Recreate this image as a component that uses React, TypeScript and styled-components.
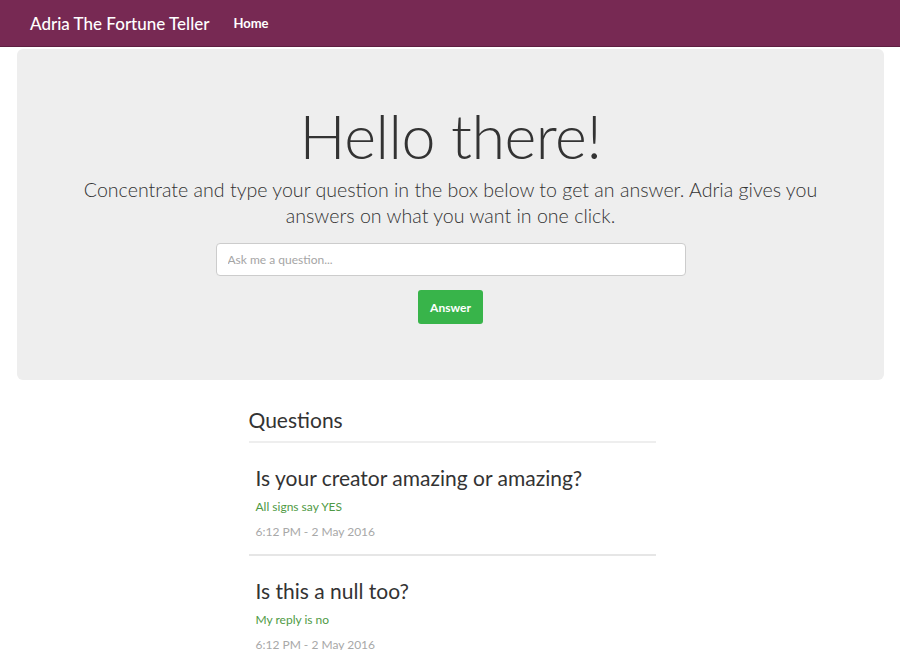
import React from 'react';
import styled, { createGlobalStyle } from 'styled-components';

const GlobalStyle = createGlobalStyle`
	body {
		margin: 0;
		background: #ffffff;
		font-family: Lato, 'Open Sans', sans-serif;
		color: #333333;
	}
`;

const Navbar = styled.nav`
	height: 46px;
	background: #772953;
	border-bottom: 1px solid #5e1f41;
	display: flex;
	align-items: center;
	padding-left: 30px;
	gap: 24px;
`;

const Brand = styled.a`
	color: #ffffff;
	font-size: 17px;
	font-weight: 500;
	text-decoration: none;
`;

const NavItem = styled.a`
	color: #ffffff;
	font-size: 13px;
	font-weight: 700;
	text-decoration: none;
`;

const Page = styled.div`
	padding: 2px 16px 0 17px;
`;

const Jumbotron = styled.section`
	background: #eeeeee;
	border-radius: 6px;
	height: 331px;
	display: flex;
	flex-direction: column;
	align-items: center;
	box-sizing: border-box;
	padding-top: 56px;
`;

const Title = styled.h1`
	margin: 0;
	font-size: 61px;
	font-weight: 300;
	line-height: 1;
	color: #333333;
	letter-spacing: -0.5px;
`;

const Lead = styled.p`
	margin: 11px 0 0;
	width: 780px;
	text-align: center;
	font-size: 19.6px;
	font-weight: 300;
	line-height: 26px;
	color: #333333;
`;

const AskForm = styled.form`
	display: flex;
	flex-direction: column;
	align-items: center;
	margin-top: 14px;
	gap: 14px;
`;

const QuestionInput = styled.input`
	width: 470px;
	height: 33px;
	box-sizing: border-box;
	border: 1px solid #cccccc;
	border-radius: 4px;
	background: #ffffff;
	padding: 0 11px;
	font-family: inherit;
	font-size: 12px;
	color: #333333;
	outline: none;

	&::placeholder {
		color: #a5a5a5;
	}
`;

const AnswerButton = styled.button`
	width: 65px;
	height: 34px;
	border: none;
	border-radius: 3px;
	background: #38b44a;
	color: #ffffff;
	font-family: inherit;
	font-size: 12px;
	font-weight: 700;
	cursor: pointer;
`;

const Questions = styled.section`
	width: 407px;
	margin: 27px auto 0;
	padding-left: 3px;
`;

const SectionTitle = styled.h2`
	margin: 0;
	font-size: 21px;
	font-weight: 400;
	color: #333333;
	padding-bottom: 9px;
	border-bottom: 2px solid #eeeeee;
`;

const Item = styled.article<{ $last?: boolean }>`
	padding: 22px 0 15px 7px;
	border-bottom: ${(p) => (p.$last ? 'none' : '2px solid #e6e6e6')};
`;

const ItemTitle = styled.h3`
	margin: 0;
	font-size: 21px;
	font-weight: 400;
	line-height: 26px;
	color: #333333;
`;

const Reply = styled.div`
	margin-top: 8px;
	font-size: 12px;
	color: #4f9a45;
`;

const Stamp = styled.div`
	margin-top: 10px;
	font-size: 12px;
	color: #a8a8a8;
`;

const questions = [
	{ title: 'Is your creator amazing or amazing?', reply: 'All signs say YES', time: '6:12 PM - 2 May 2016' },
	{ title: 'Is this a null too?', reply: 'My reply is no', time: '6:12 PM - 2 May 2016' },
];

export default function App(): JSX.Element {
	return (
		<>
			<GlobalStyle />
			<Navbar>
				<Brand href="#">Adria The Fortune Teller</Brand>
				<NavItem href="#">Home</NavItem>
			</Navbar>
			<Page>
				<Jumbotron>
					<Title>Hello there!</Title>
					<Lead>
						Concentrate and type your question in the box below to get an answer. Adria gives you answers on
						what you want in one click.
					</Lead>
					<AskForm onSubmit={(e) => e.preventDefault()}>
						<QuestionInput placeholder="Ask me a question..." />
						<AnswerButton type="submit">Answer</AnswerButton>
					</AskForm>
				</Jumbotron>
				<Questions>
					<SectionTitle>Questions</SectionTitle>
					{questions.map((q, i) => (
						<Item key={q.title} $last={i === questions.length - 1}>
							<ItemTitle>{q.title}</ItemTitle>
							<Reply>{q.reply}</Reply>
							<Stamp>{q.time}</Stamp>
						</Item>
					))}
				</Questions>
			</Page>
		</>
	);
}
